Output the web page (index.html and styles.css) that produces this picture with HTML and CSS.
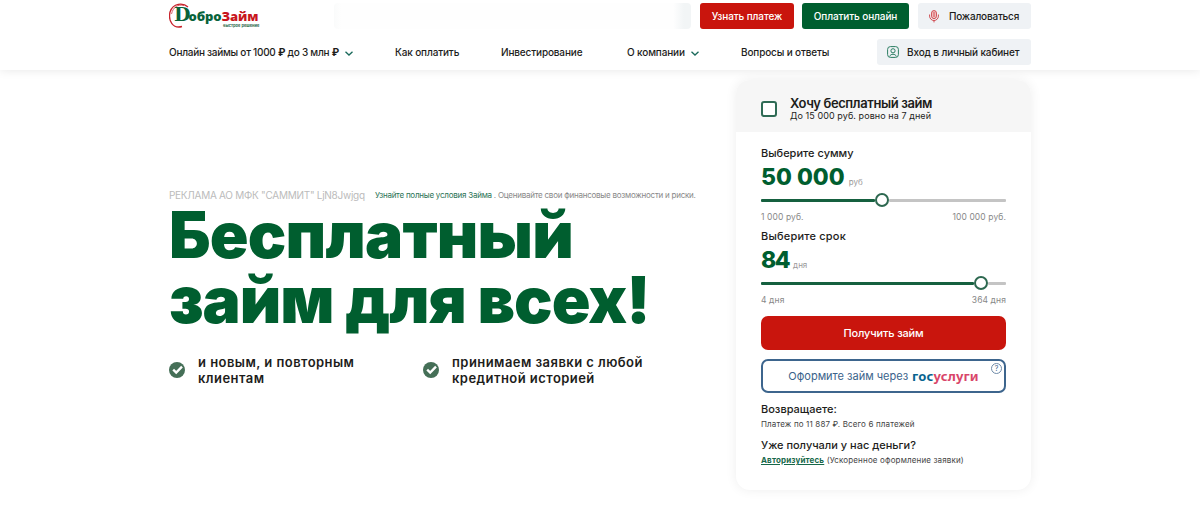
FILE: index.html
```html
<!DOCTYPE html>
<html lang="ru">
<head>
    <meta charset="UTF-8">
    <meta name="viewport" content="width=device-width, initial-scale=1.0">
    <title>ДоброЗайм</title>
    <link rel="stylesheet" href="styles.css">
</head>
<body>
    <header class="header">
        <div class="container">
            <div class="top-row">
                <a class="logo">
                    <svg class="logo-ring" width="24" height="26" viewBox="0 0 24 26" fill="none">
                        <path d="M19 4C14-.5 4 0 1 9c-2 9 3 17 12 14.500" stroke="#c8232c" stroke-width="1.3"/>
                        <path d="M15 2.500C9 1 4 4 2.500 11" stroke="#c8232c" stroke-width=".7"/>
                    </svg>
                    <span class="logo-name"><span class="logo-d">D</span>обро<span class="logo-red">Займ</span></span>
                    <span class="logo-sub">быстрое решение</span>
                </a>
                <div class="search"></div>
                <a class="btn btn-red">Узнать платеж</a>
                <a class="btn btn-green">Оплатить онлайн</a>
                <a class="btn btn-light complain">
                    <svg width="10" height="13" viewBox="0 0 10 13" fill="none" stroke="#cf4a50">
                        <rect x="2.6" y=".6" width="4.8" height="8" rx="2.4" fill="#f4c9cb"/>
                        <path d="M.6 4.5v1.6a4.4 4.4 0 0 0 8.8 0V4.5M5 10.4v2M5 2v5"/>
                    </svg>
                    <span>Пожаловаться</span>
                </a>
            </div>
            <nav class="nav">
                <a class="nav-first">Онлайн займы от 1000 <b>₽</b> до 3 млн <b>₽</b><svg class="arrow" width="8" height="5" viewBox="0 0 8 5"><path d="M.5.7 4 4 7.5.7"/></svg></a>
                <a>Как оплатить</a>
                <a>Инвестирование</a>
                <a>О компании<svg class="arrow" width="8" height="5" viewBox="0 0 8 5"><path d="M.5.7 4 4 7.5.7"/></svg></a>
                <a>Вопросы и ответы</a>
                <a class="btn btn-light login">
                    <svg width="12" height="12" viewBox="0 0 12 12" fill="none" stroke="#2b7d62">
                        <rect x=".6" y=".6" width="10.8" height="10.8" rx="2.8"/>
                        <circle cx="6" cy="4.8" r="2.1"/>
                        <path d="M2.8 10.5c.3-3 6.1-3 6.4 0"/>
                    </svg>
                    <span>Вход в личный кабинет</span>
                </a>
            </nav>
        </div>
    </header>

    <main class="container main">
        <section class="promo">
            <div class="note">
                <span class="note-ad">РЕКЛАМА АО МФК "САММИТ" LjN8Jwjgq</span>
                <span class="note-text"><a>Узнайте полные условия Займа</a> . Оценивайте свои финансовые возможности и риски.</span>
            </div>
            <h1>Бесплатный<br><span class="line-two">займ для всех!</span></h1>
            <ul class="benefits">
                <li>
                    <svg width="16" height="16" viewBox="0 0 16 16"><circle cx="8" cy="8" r="8" fill="#456f57"/><path d="M4.2 7.600 7.2 10.5 13 4.700" fill="none" stroke="#fff" stroke-width="2.4"/></svg>
                    <span>и новым, и повторным<br>клиентам</span>
                </li>
                <li>
                    <svg width="16" height="16" viewBox="0 0 16 16"><circle cx="8" cy="8" r="8" fill="#456f57"/><path d="M4.2 7.600 7.2 10.5 13 4.700" fill="none" stroke="#fff" stroke-width="2.4"/></svg>
                    <span>принимаем заявки с любой<br>кредитной историей</span>
                </li>
            </ul>
        </section>

        <section class="card">
            <div class="card-head">
                <span class="checkbox"></span>
                <div>
                    <div class="free-title">Хочу бесплатный займ</div>
                    <div class="free-text">До 15 000 руб. ровно на 7 дней</div>
                </div>
            </div>
            <div class="card-body">
                <div class="label">Выберите сумму</div>
                <div class="value"><b>50 000</b><span>руб</span></div>
                <div class="slider"><i class="fill"></i><i class="knob"></i><i class="rest"></i></div>
                <div class="limits"><span>1 000 руб.</span><span>100 000 руб.</span></div>
                <div class="label label-term">Выберите срок</div>
                <div class="value"><b class="term-value">84</b><span>дня</span></div>
                <div class="slider term"><i class="fill"></i><i class="knob"></i><i class="rest"></i></div>
                <div class="limits"><span>4 дня</span><span>364 дня</span></div>
                <a class="get">Получить займ</a>
                <a class="gos">
                    <span class="gos-text">Оформите займ через</span>
                    <span class="gos-logo"><span>гос</span>услуги</span>
                    <span class="help">?</span>
                </a>
                <div class="label return">Возвращаете:</div>
                <div class="small">Платеж по 11 887 ₽. Всего 6 платежей</div>
                <div class="label again">Уже получали у нас деньги?</div>
                <div class="small"><a>Авторизуйтесь</a> (Ускоренное оформление заявки)</div>
            </div>
        </section>
    </main>
</body>
</html>
```

FILE: styles.css
```css
* {
    box-sizing: border-box;
}
body {
    margin: 0;
    font-family: Inter, "Noto Sans", sans-serif;
    font-weight: 500;
    color: #1d1d1b;
    background: #fff;
    height: 521px;
    overflow: hidden;
}
.container {
    width: 862px;
    margin: 0 auto;
}
.header {
    height: 70px;
    padding-top: 3px;
    background: #fff;
    box-shadow: 0 0 10px rgba(0, 0, 0, 0.1);
}
.top-row {
    display: flex;
    height: 26px;
}
.logo {
    position: relative;
    width: 165px;
    height: 26px;
}
.logo-ring {
    position: absolute;
    left: 0;
    top: 0;
}
.logo-name {
    position: absolute;
    left: 5px;
    top: 0;
    font: bold 13px/22px "Open Sans", sans-serif;
    font-weight: 800;
    letter-spacing: -0.1px;
    color: #08633b;
    white-space: nowrap;
}
.logo-d {
    font: bold 19px/22px "DejaVu Serif", serif;
    letter-spacing: -2px;
}
.logo-red {
    color: #c8171d;
}
.logo-sub {
    position: absolute;
    left: 54px;
    top: 20px;
    font-size: 4px;
    line-height: 5px;
    font-weight: 700;
    color: #2f6b4d;
    white-space: nowrap;
}
.search {
    width: 357px;
    margin-right: 9px;
    border-radius: 4px;
    background: linear-gradient(90deg, #fafbfb, #fefefe 2%, #fefefe 95%, #f2f5f6 98%);
}
.btn {
    display: flex;
    align-items: center;
    justify-content: center;
    height: 26px;
    border-radius: 3px;
    font-size: 10px;
    white-space: nowrap;
}
.btn-red {
    width: 94px;
    margin-right: 8px;
    background: #c9150d;
    color: #fff;
    letter-spacing: -0.1px;
}
.btn-green {
    width: 107px;
    margin-right: 9px;
    background: #005e2f;
    color: #fff;
    letter-spacing: -0.1px;
}
.btn-light {
    background: #eff2f5;
}
.complain {
    width: 113px;
    justify-content: flex-start;
    padding-left: 11px;
    gap: 10px;
    letter-spacing: -0.2px;
}
.nav {
    display: grid;
    grid-template-columns: 226px 106px 126px 114px 136px 154px;
    align-items: center;
    margin-top: 10px;
    font-size: 10px;
    letter-spacing: -0.14px;
    white-space: nowrap;
}
.nav-first {
    letter-spacing: -0.26px;
}
.arrow {
    margin-left: 6px;
    fill: none;
    stroke: #1a6a5b;
    stroke-width: 1.3;
}
.login {
    justify-content: flex-start;
    padding-left: 10px;
    gap: 8px;
}
.main {
    display: flex;
    justify-content: space-between;
    padding-top: 10px;
}
.promo {
    padding-top: 107px;
}
.note {
    display: flex;
    align-items: center;
    height: 15px;
    white-space: nowrap;
}
.note-ad {
    width: 206px;
    font-size: 10px;
    font-weight: 400;
    letter-spacing: -0.27px;
    color: #bbb;
}
.note-text {
    font-size: 8px;
    font-weight: 400;
    letter-spacing: -0.24px;
    color: #888;
}
.note-text a {
    color: #2b7355;
}
h1 {
    margin: 0;
    font-size: 64px;
    line-height: 65px;
    font-weight: 900;
    letter-spacing: -0.75px;
    color: #005e2f;
    white-space: nowrap;
}
.line-two {
    letter-spacing: -1px;
}
.benefits {
    display: flex;
    margin: 22px 0 0;
    padding: 0;
    list-style: none;
    font-size: 13px;
    line-height: 16px;
    font-weight: 600;
    letter-spacing: 0.45px;
}
.benefits li {
    display: flex;
    align-items: center;
    gap: 13px;
    width: 254px;
    white-space: nowrap;
}
.card {
    width: 295px;
    height: 410px;
    border-radius: 14px;
    background: #fff;
    box-shadow: 0 0 12px rgba(0, 0, 0, 0.07);
}
.card-head {
    display: flex;
    align-items: center;
    height: 52px;
    padding: 5px 0 0 25px;
    gap: 13px;
    border-radius: 14px 14px 0 0;
    background: #f6f6f6;
    white-space: nowrap;
}
.checkbox {
    width: 16px;
    height: 16px;
    border: 2px solid #2f6b55;
    border-radius: 3px;
    background: #fff;
}
.free-title {
    font-size: 13px;
    line-height: 14px;
    font-weight: 600;
    letter-spacing: -0.4px;
}
.free-text {
    font-size: 9px;
    line-height: 11px;
    font-weight: 400;
    letter-spacing: 0.08px;
}
.card-body {
    padding: 13px 25px 0;
    white-space: nowrap;
}
.label {
    font-size: 11px;
    line-height: 16px;
}
.value {
    display: flex;
    align-items: baseline;
    gap: 4px;
    height: 32px;
    line-height: 32px;
}
.value b {
    font-size: 23px;
    font-weight: 800;
    color: #005e2f;
}
.value .term-value {
    letter-spacing: -1.5px;
}
.value span {
    font-size: 8px;
    font-weight: 400;
    color: #999;
}
.slider {
    display: flex;
    align-items: center;
    height: 14px;
}
.fill {
    width: 114px;
    height: 3px;
    border-radius: 1px;
    background: #15603f;
}
.term .fill {
    width: 213px;
}
.knob {
    width: 14px;
    height: 14px;
    border: 2px solid #2d6850;
    border-radius: 50%;
    background: #fff;
}
.rest {
    flex: 1;
    height: 3px;
    border-radius: 1px;
    background: #c4c4c4;
}
.limits {
    display: flex;
    justify-content: space-between;
    margin-top: 4px;
    font-size: 8.5px;
    line-height: 12px;
    font-weight: 400;
    letter-spacing: 0.1px;
    color: #888;
}
.label-term {
    margin-top: 5px;
    letter-spacing: 0.2px;
}
.get,
.gos {
    display: flex;
    align-items: center;
    justify-content: center;
    height: 34px;
    border-radius: 7px;
    font-size: 11px;
}
.get {
    margin-top: 10px;
    background: #c9150d;
    color: #fff;
    letter-spacing: -0.15px;
}
.gos {
    position: relative;
    margin-top: 9px;
    border: 2px solid #3d658d;
    gap: 4px;
    font-weight: 400;
    color: #3b638b;
}
.gos-logo {
    font: bold 13px/16px "Noto Sans", sans-serif;
    letter-spacing: 0.15px;
    color: #d9466a;
}
.gos-logo span {
    color: #08648f;
}
.help {
    position: absolute;
    top: 2px;
    right: 2px;
    width: 11px;
    height: 11px;
    border: 1px solid #6f8ba8;
    border-radius: 50%;
    font-size: 7px;
    line-height: 9px;
    text-align: center;
}
.return {
    margin-top: 8px;
}
.small {
    font-size: 8px;
    line-height: 14px;
    font-weight: 400;
    letter-spacing: 0.15px;
    color: #444;
}
.again {
    margin-top: 6px;
}
.small a {
    font-weight: 700;
    color: #17684a;
    text-decoration: underline;
}
```
